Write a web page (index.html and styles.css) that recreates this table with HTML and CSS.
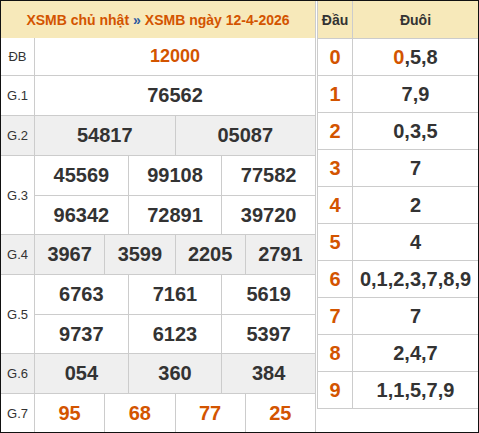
FILE: index.html
```html
<!DOCTYPE html>
<html lang="vi">
<head>
    <meta charset="UTF-8">
    <meta name="viewport" content="width=device-width, initial-scale=1.0">
    <title>XSMB ngày 12-4-2026</title>
    <link rel="stylesheet" href="styles.css">
</head>
<body>
    <div class="frame">
        <div class="results">
            <div class="res-head">
                <a href="#">XSMB chủ nhật</a> <span class="sep">»</span> <a href="#">XSMB ngày 12-4-2026</a>
            </div>
            <div class="prize db">
                <div class="label">ĐB</div>
                <div class="nums">
                    <div class="line"><span class="cell special">12000</span></div>
                </div>
            </div>
            <div class="prize">
                <div class="label">G.1</div>
                <div class="nums">
                    <div class="line"><span class="cell">76562</span></div>
                </div>
            </div>
            <div class="prize alt">
                <div class="label">G.2</div>
                <div class="nums">
                    <div class="line"><span class="cell">54817</span><span class="cell">05087</span></div>
                </div>
            </div>
            <div class="prize">
                <div class="label">G.3</div>
                <div class="nums">
                    <div class="line"><span class="cell">45569</span><span class="cell">99108</span><span class="cell">77582</span></div>
                    <div class="line"><span class="cell">96342</span><span class="cell">72891</span><span class="cell">39720</span></div>
                </div>
            </div>
            <div class="prize alt">
                <div class="label">G.4</div>
                <div class="nums">
                    <div class="line"><span class="cell">3967</span><span class="cell">3599</span><span class="cell">2205</span><span class="cell">2791</span></div>
                </div>
            </div>
            <div class="prize">
                <div class="label">G.5</div>
                <div class="nums">
                    <div class="line"><span class="cell">6763</span><span class="cell">7161</span><span class="cell">5619</span></div>
                    <div class="line"><span class="cell">9737</span><span class="cell">6123</span><span class="cell">5397</span></div>
                </div>
            </div>
            <div class="prize alt">
                <div class="label">G.6</div>
                <div class="nums">
                    <div class="line"><span class="cell">054</span><span class="cell">360</span><span class="cell">384</span></div>
                </div>
            </div>
            <div class="prize g7">
                <div class="label">G.7</div>
                <div class="nums">
                    <div class="line"><span class="cell special">95</span><span class="cell special">68</span><span class="cell special">77</span><span class="cell special">25</span></div>
                </div>
            </div>
        </div>
        <div class="loto">
            <div class="loto-row loto-head">
                <div class="dau">Đầu</div>
                <div class="duoi">Đuôi</div>
            </div>
            <div class="loto-row"><div class="dau">0</div><div class="duoi"><span class="hit">0</span>,5,8</div></div>
            <div class="loto-row"><div class="dau">1</div><div class="duoi">7,9</div></div>
            <div class="loto-row"><div class="dau">2</div><div class="duoi">0,3,5</div></div>
            <div class="loto-row"><div class="dau">3</div><div class="duoi">7</div></div>
            <div class="loto-row"><div class="dau">4</div><div class="duoi">2</div></div>
            <div class="loto-row"><div class="dau">5</div><div class="duoi">4</div></div>
            <div class="loto-row"><div class="dau">6</div><div class="duoi">0,1,2,3,7,8,9</div></div>
            <div class="loto-row"><div class="dau">7</div><div class="duoi">7</div></div>
            <div class="loto-row"><div class="dau">8</div><div class="duoi">2,4,7</div></div>
            <div class="loto-row"><div class="dau">9</div><div class="duoi">1,1,5,7,9</div></div>
        </div>
    </div>
</body>
</html>
```

FILE: styles.css
```css
* {
    margin: 0px;
    padding: 0px;
    box-sizing: border-box;
}
body {
    font-family: "Liberation Sans", Arial, sans-serif;
    color: #333;
    background-color: white;
}
.frame {
    width: 479px;
    height: 433px;
    border: 1px solid #111;
    display: flex;
    gap: 1px;
}
.results {
    width: 315px;
    border-right: 1px solid #ccc;
    display: flex;
    flex-direction: column;
}
.res-head {
    height: 37px;
    background-color: #f7e9ba;
    display: flex;
    align-items: center;
    justify-content: center;
    gap: 4px;
    font-size: 14px;
    font-weight: bold;
}
.res-head a {
    color: #d35400;
    text-decoration: none;
}
.res-head .sep {
    color: #2c5aa0;
}
.prize {
    display: flex;
    border-bottom: 1px solid #ccc;
}
.prize.alt {
    background-color: #efefef;
}
.prize.g7 {
    flex: 1;
    border-bottom: none;
}
.label {
    width: 34px;
    border-right: 1px solid #ccc;
    display: flex;
    align-items: center;
    justify-content: center;
    font-size: 13px;
}
.nums {
    flex: 1;
    display: flex;
    flex-direction: column;
}
.line {
    height: 39px;
    display: flex;
}
.line + .line {
    border-top: 1px solid #ccc;
}
.db .line {
    height: 37px;
}
.g7 .line {
    height: 100%;
}
.cell {
    flex: 1;
    display: flex;
    align-items: center;
    justify-content: center;
    font-size: 20px;
    font-weight: bold;
}
.cell + .cell {
    border-left: 1px solid #ccc;
}
.db .cell {
    font-size: 18px;
}
.special, .hit {
    color: #d35400;
}
.loto {
    width: 161px;
    border-left: 1px solid #ccc;
    align-self: flex-start;
}
.loto-row {
    height: 37px;
    display: flex;
    border-bottom: 1px solid #ccc;
    font-size: 20px;
    font-weight: bold;
}
.loto-head {
    height: 38px;
    background-color: #f7e9ba;
    font-size: 14px;
}
.dau {
    width: 35px;
    border-right: 1px solid #ccc;
    display: flex;
    align-items: center;
    justify-content: center;
    color: #d35400;
}
.duoi {
    flex: 1;
    display: flex;
    align-items: center;
    justify-content: center;
}
.loto-head .dau {
    color: #333;
}
```
